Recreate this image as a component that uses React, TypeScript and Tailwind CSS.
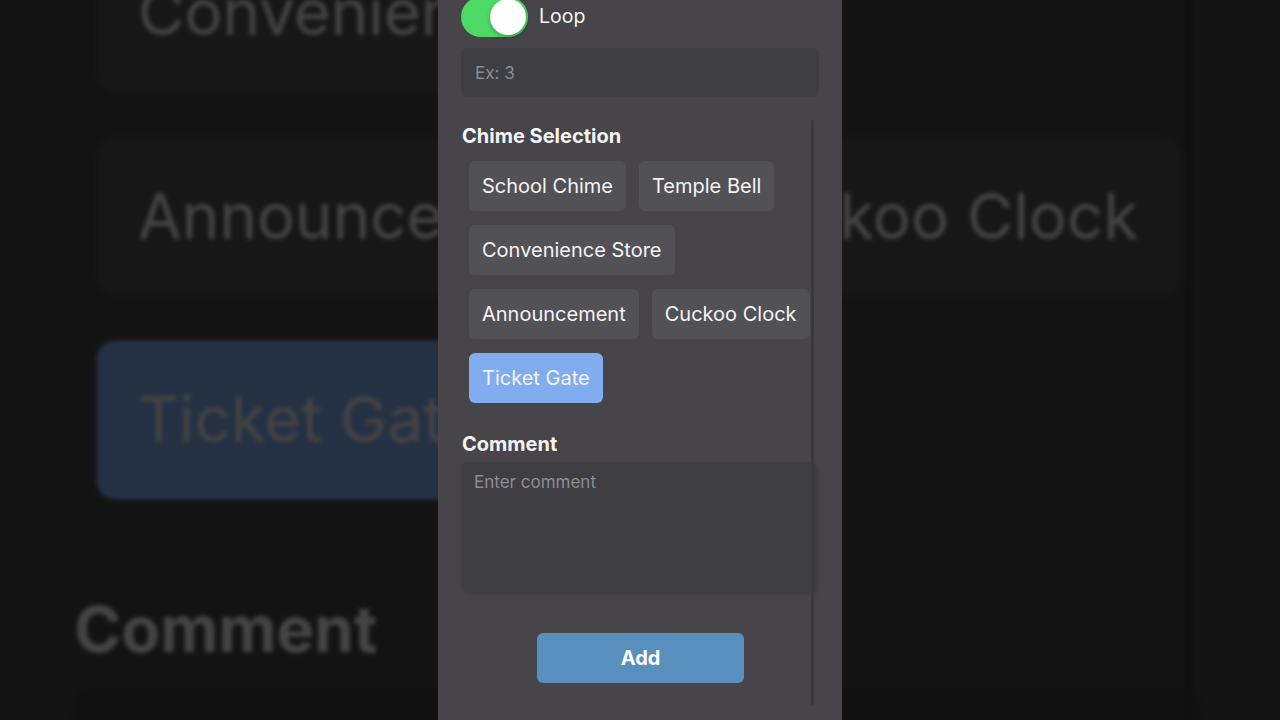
const chimes = [
  "School Chime",
  "Temple Bell",
  "Convenience Store",
  "Announcement",
  "Cuckoo Clock",
  "Ticket Gate",
];

const selectedChime = "Ticket Gate";

function FormContent() {
  return (
    <div className="flex w-[404px] flex-col pl-[23px] font-['Inter',sans-serif] text-[#f4f4f5]">
      <div className="-mt-[3px] flex items-center">
        <span className="flex h-[40px] w-[67px] items-center justify-end rounded-full bg-[#4cd964] p-[2px]">
          <span className="h-[36px] w-[36px] rounded-full bg-white shadow-[0_2px_4px_rgba(0,0,0,0.25)]" />
        </span>
        <span className="ml-[11px] text-[19.5px]">Loop</span>
      </div>

      <input
        className="mt-[11px] h-[49px] w-[358px] rounded-md bg-[#3f3e42] px-[14px] text-[17px] outline-none placeholder:text-[#8e8d92]"
        placeholder="Ex: 3"
      />

      <div className="mt-[26px] flex">
        <div className="flex w-[350px] flex-col">
          <h2 className="h-[26px] pl-[1px] text-[20px] font-bold leading-[26px]">
            Chime Selection
          </h2>
          <div className="mt-[12px] flex flex-wrap gap-x-[13px] gap-y-[14px] pl-[8px]">
            {chimes.map((chime) => (
              <button
                key={chime}
                className={
                  chime === selectedChime
                    ? "h-[50px] rounded-md bg-[#82acf0] px-[13px] text-[20px] text-[#f4f4f5]"
                    : "h-[50px] rounded-md bg-[#525155] px-[13px] text-[20px] text-[#f4f4f5]"
                }
              >
                {chime}
              </button>
            ))}
          </div>

          <h2 className="mt-[28px] h-[26px] pl-[1px] text-[20px] font-bold leading-[26px]">
            Comment
          </h2>
          <textarea
            className="mt-[5px] h-[130px] w-[355px] resize-none rounded-md bg-[#3f3e42] px-[13px] py-[8px] text-[17px] shadow-[2px_2px_4px_rgba(0,0,0,0.12)] outline-none placeholder:text-[#8e8d92]"
            placeholder="Enter comment"
          />

          <button className="mt-[41px] ml-[76px] h-[50px] w-[207px] rounded-md bg-[#588fbd] text-[20px] font-bold text-white">
            Add
          </button>
        </div>
        <div className="mt-[-3px] h-[585px] w-[3px] rounded-full bg-[#3a393d]" />
      </div>
    </div>
  );
}

export default function App() {
  return (
    <main className="relative flex h-[720px] w-[1280px] justify-center overflow-hidden bg-[#141416]">
      {/* blurred, zoomed copy of the form behind the phone screen */}
      <div className="absolute inset-0 overflow-hidden">
        <div className="absolute left-[-2px] top-[-782px] bg-[#474549] blur-[2px] brightness-[0.28]">
          <div className="origin-top-left scale-[3.18] bg-[#474549]">
            <FormContent />
          </div>
        </div>
      </div>

      <section className="relative z-10 h-full w-[404px] overflow-hidden bg-[#474549]">
        <FormContent />
      </section>
    </main>
  );
}
